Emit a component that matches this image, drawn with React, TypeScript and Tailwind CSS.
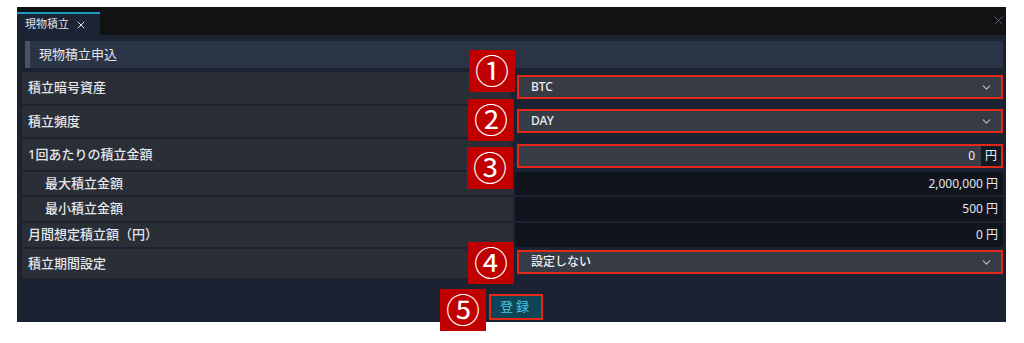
import { ChevronDown, X } from 'lucide-react';

const FONT = { fontFamily: '"Noto Sans", "Noto Sans CJK JP", sans-serif' };

function Badge({ n, className }: { n: string; className: string }) {
  return (
    <div
      className={`absolute flex h-[42px] w-[46px] items-center justify-center bg-[#c00000] text-[34px] leading-none text-white ${className}`}
    >
      {n}
    </div>
  );
}

function Select({ value }: { value: string }) {
  return (
    <div className="ml-[4px] flex h-[24px] w-[486px] items-center justify-between border-2 border-[#e3281a] bg-[#363b46] pl-[12px] pr-[8px]">
      <span className="text-[12px] font-medium text-[#eceef2]">{value}</span>
      <ChevronDown size={13} strokeWidth={2} className="text-[#b8bcc4]" />
    </div>
  );
}

function Label({ text, sub, h }: { text: string; sub?: boolean; h: string }) {
  return (
    <div
      className={`flex w-[491px] items-center bg-[#2a2e37] text-[13px] font-medium text-[#e4e6ea] ${h} ${sub ? 'pl-[23px]' : 'pl-[6px]'}`}
    >
      {text}
    </div>
  );
}

function Amount({ value }: { value: string }) {
  return (
    <div className="flex flex-1 items-center justify-end bg-[#0f141d] pr-[5px] text-[12px] text-[#e4e6ea]">
      {value} 円
    </div>
  );
}

export default function App() {
  return (
    <div className="relative h-[343px] w-[1024px] overflow-hidden bg-white" style={FONT}>
      <div className="ml-[17px] mt-[7px] flex h-[315px] w-[989px] flex-col bg-[#1b2231]">
        {/* tab bar */}
        <div className="flex h-[28px] items-end justify-between bg-[#111214]">
          <div className="flex h-[23px] w-[83px] items-center gap-[6px] border-t-2 border-[#1c9cc4] bg-[#1a2435] pl-[8px] text-[11px] text-[#e4e6ea]">
            現物積立
            <X size={12} strokeWidth={2} />
          </div>
          <X size={15} strokeWidth={1.5} className="mb-[7px] text-[#5b606a]" />
        </div>

        {/* header */}
        <div className="ml-[8px] mr-[3px] mt-[6px] flex h-[27px] items-center border-l-[5px] border-[#4a5160] bg-[#2a3447] pl-[9px] text-[13px] text-[#e4e6ea]">
          現物積立申込
        </div>

        <div className="ml-[5px] mr-[3px] mt-[4px] flex flex-col gap-[2px]">
          <div className="flex gap-[2px]">
            <Label text="積立暗号資産" h="h-[32px]" />
            <div className="flex flex-1 items-start pt-[3px]">
              <Select value="BTC" />
            </div>
          </div>
          <div className="flex gap-[2px]">
            <Label text="積立頻度" h="h-[31px]" />
            <div className="flex flex-1 items-start pt-[3px]">
              <Select value="DAY" />
            </div>
          </div>
          <div className="flex gap-[2px]">
            <Label text="1回あたりの積立金額" h="h-[31px]" />
            <div className="flex flex-1 items-start pt-[5px]">
              <div className="ml-[4px] flex h-[24px] w-[486px] items-center border-2 border-[#e3281a] bg-[#363b46] text-[12px] text-[#eceef2]">
                <span className="flex-1 pr-[6px] text-right">0</span>
                <span className="flex h-full w-[20px] items-center justify-center bg-[#141a25]">円</span>
              </div>
            </div>
          </div>
          <div className="flex gap-[2px]">
            <Label text="最大積立金額" sub h="h-[23px]" />
            <Amount value="2,000,000" />
          </div>
          <div className="flex gap-[2px]">
            <Label text="最小積立金額" sub h="h-[24px]" />
            <Amount value="500" />
          </div>
          <div className="flex gap-[2px]">
            <Label text="月間想定積立額（円）" h="h-[24px]" />
            <Amount value="0" />
          </div>
          <div className="flex gap-[2px]">
            <Label text="積立期間設定" h="h-[29px]" />
            <div className="flex flex-1 items-start pt-[1px]">
              <Select value="設定しない" />
            </div>
          </div>
        </div>

        {/* footer */}
        <div className="flex flex-1 items-start justify-center pl-[9px] pt-[16px]">
          <button className="flex h-[26px] w-[54px] items-center justify-center border-2 border-[#e3281a] bg-[#0f4656] text-[13px] tracking-[3px] text-[#4cc7dc]">
            登録
          </button>
        </div>
      </div>

      <Badge n="①" className="left-[469px] top-[50px]" />
      <Badge n="②" className="left-[468px] top-[99px]" />
      <Badge n="③" className="left-[467px] top-[147px]" />
      <Badge n="④" className="left-[468px] top-[242px]" />
      <Badge n="⑤" className="left-[440px] top-[289px]" />
    </div>
  );
}
